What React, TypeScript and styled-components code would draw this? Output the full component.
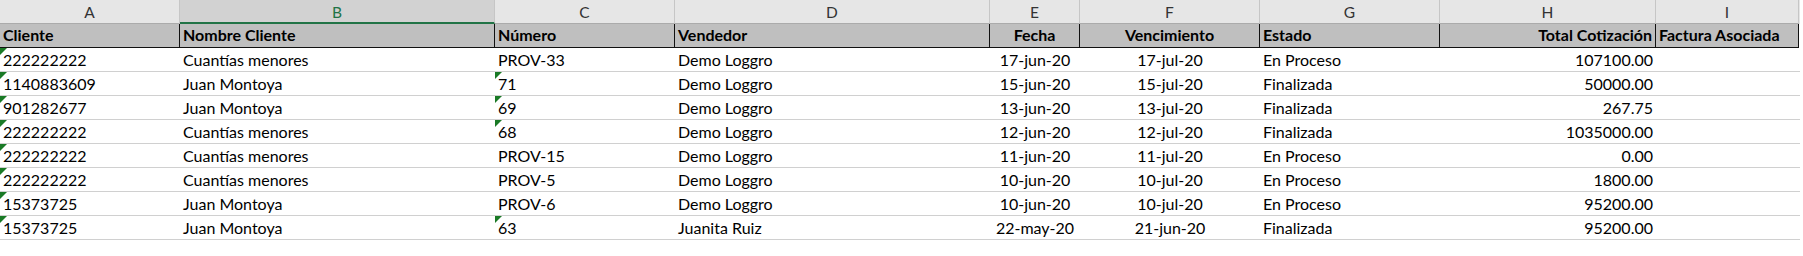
import styled, { createGlobalStyle } from 'styled-components'

type Align = 'left' | 'center' | 'right'

interface Column {
  letter: string
  label: string
  width: number
  align: Align
}

const columns: Column[] = [
  { letter: 'A', label: 'Cliente', width: 180, align: 'left' },
  { letter: 'B', label: 'Nombre Cliente', width: 315, align: 'left' },
  { letter: 'C', label: 'Número', width: 180, align: 'left' },
  { letter: 'D', label: 'Vendedor', width: 315, align: 'left' },
  { letter: 'E', label: 'Fecha', width: 90, align: 'center' },
  { letter: 'F', label: 'Vencimiento', width: 180, align: 'center' },
  { letter: 'G', label: 'Estado', width: 180, align: 'left' },
  { letter: 'H', label: 'Total Cotización', width: 216, align: 'right' },
  { letter: 'I', label: 'Factura Asociada', width: 143, align: 'left' },
]

const rows: string[][] = [
  ['222222222', 'Cuantías menores', 'PROV-33', 'Demo Loggro', '17-jun-20', '17-jul-20', 'En Proceso', '107100.00', ''],
  ['1140883609', 'Juan Montoya', '71', 'Demo Loggro', '15-jun-20', '15-jul-20', 'Finalizada', '50000.00', ''],
  ['901282677', 'Juan Montoya', '69', 'Demo Loggro', '13-jun-20', '13-jul-20', 'Finalizada', '267.75', ''],
  ['222222222', 'Cuantías menores', '68', 'Demo Loggro', '12-jun-20', '12-jul-20', 'Finalizada', '1035000.00', ''],
  ['222222222', 'Cuantías menores', 'PROV-15', 'Demo Loggro', '11-jun-20', '11-jul-20', 'En Proceso', '0.00', ''],
  ['222222222', 'Cuantías menores', 'PROV-5', 'Demo Loggro', '10-jun-20', '10-jul-20', 'En Proceso', '1800.00', ''],
  ['15373725', 'Juan Montoya', 'PROV-6', 'Demo Loggro', '10-jun-20', '10-jul-20', 'En Proceso', '95200.00', ''],
  ['15373725', 'Juan Montoya', '63', 'Juanita Ruiz', '22-may-20', '21-jun-20', 'Finalizada', '95200.00', ''],
]

// number stored as text -> green corner flag (only cols A and C)
const isFlagged = (colIndex: number, value: string) =>
  (colIndex === 0 || colIndex === 2) && /^\d+$/.test(value)

const template = columns.map((c) => `${c.width}px`).join(' ')
const selectedColumn = 'B'

const App = () => {
  return (
    <>
      <GlobalStyle />
      <Sheet>
        <HeaderRow $template={template}>
          {columns.map((col) => (
            <ColumnLetter key={col.letter} $selected={col.letter === selectedColumn}>
              {col.letter}
            </ColumnLetter>
          ))}
        </HeaderRow>
        <LabelRow $template={template}>
          {columns.map((col) => (
            <LabelCell key={col.letter} $align={col.align}>
              {col.label}
            </LabelCell>
          ))}
        </LabelRow>
        {rows.map((row, rowIndex) => (
          <DataRow key={rowIndex} $template={template}>
            {row.map((value, colIndex) => (
              <DataCell key={colIndex} $align={columns[colIndex].align}>
                {isFlagged(colIndex, value) && <TextFlag />}
                {value}
              </DataCell>
            ))}
          </DataRow>
        ))}
      </Sheet>
    </>
  )
}

const justify = (align: Align) =>
  align === 'center' ? 'center' : align === 'right' ? 'flex-end' : 'flex-start'

const GlobalStyle = createGlobalStyle`
  html, body {
    margin: 0;
    padding: 0;
    background: #ffffff;
  }
  body {
    font-family: Lato, "Liberation Sans", sans-serif;
    font-size: 16px;
    color: #000;
  }
`

const Sheet = styled.div`
  display: flex;
  flex-direction: column;
  width: 1800px;
`

const HeaderRow = styled.div<{ $template: string }>`
  display: grid;
  grid-template-columns: ${(p) => p.$template};
  height: 24px;
  background-color: #e6e6e6;
`

const ColumnLetter = styled.div<{ $selected: boolean }>`
  display: flex;
  align-items: center;
  justify-content: center;
  box-sizing: border-box;
  height: 24px;
  padding-top: 1px;
  border-right: 1px solid #c6c6c6;
  border-bottom: ${(p) => (p.$selected ? '2px solid #217346' : '1px solid #ababab')};
  background-color: ${(p) => (p.$selected ? '#d2d2d2' : '#e6e6e6')};
  color: ${(p) => (p.$selected ? '#217346' : '#333333')};
  font-size: 15.5px;
`

const LabelRow = styled.div<{ $template: string }>`
  display: grid;
  grid-template-columns: ${(p) => p.$template};
  height: 24px;
`

const LabelCell = styled.div<{ $align: Align }>`
  display: flex;
  align-items: flex-end;
  justify-content: ${(p) => justify(p.$align)};
  box-sizing: border-box;
  height: 24px;
  padding: 0 3px 3px 3px;
  background-color: #bfbfbf;
  border-right: 1px solid #111111;
  border-bottom: 1px solid #111111;
  font-weight: 700;
  line-height: 18px;
  white-space: nowrap;
  overflow: hidden;
`

const DataRow = styled.div<{ $template: string }>`
  display: grid;
  grid-template-columns: ${(p) => p.$template};
  height: 24px;
  box-sizing: border-box;
  border-bottom: 1px solid #d0d0d0;
`

const DataCell = styled.div<{ $align: Align }>`
  position: relative;
  display: flex;
  align-items: flex-end;
  justify-content: ${(p) => justify(p.$align)};
  box-sizing: border-box;
  height: 23px;
  padding: 0 3px 2px 3px;
  line-height: 18px;
  white-space: nowrap;
`

const TextFlag = styled.span`
  position: absolute;
  top: 0;
  left: 0;
  width: 0;
  height: 0;
  border-top: 7px solid #1a7a26;
  border-right: 7px solid transparent;
`

export default App
